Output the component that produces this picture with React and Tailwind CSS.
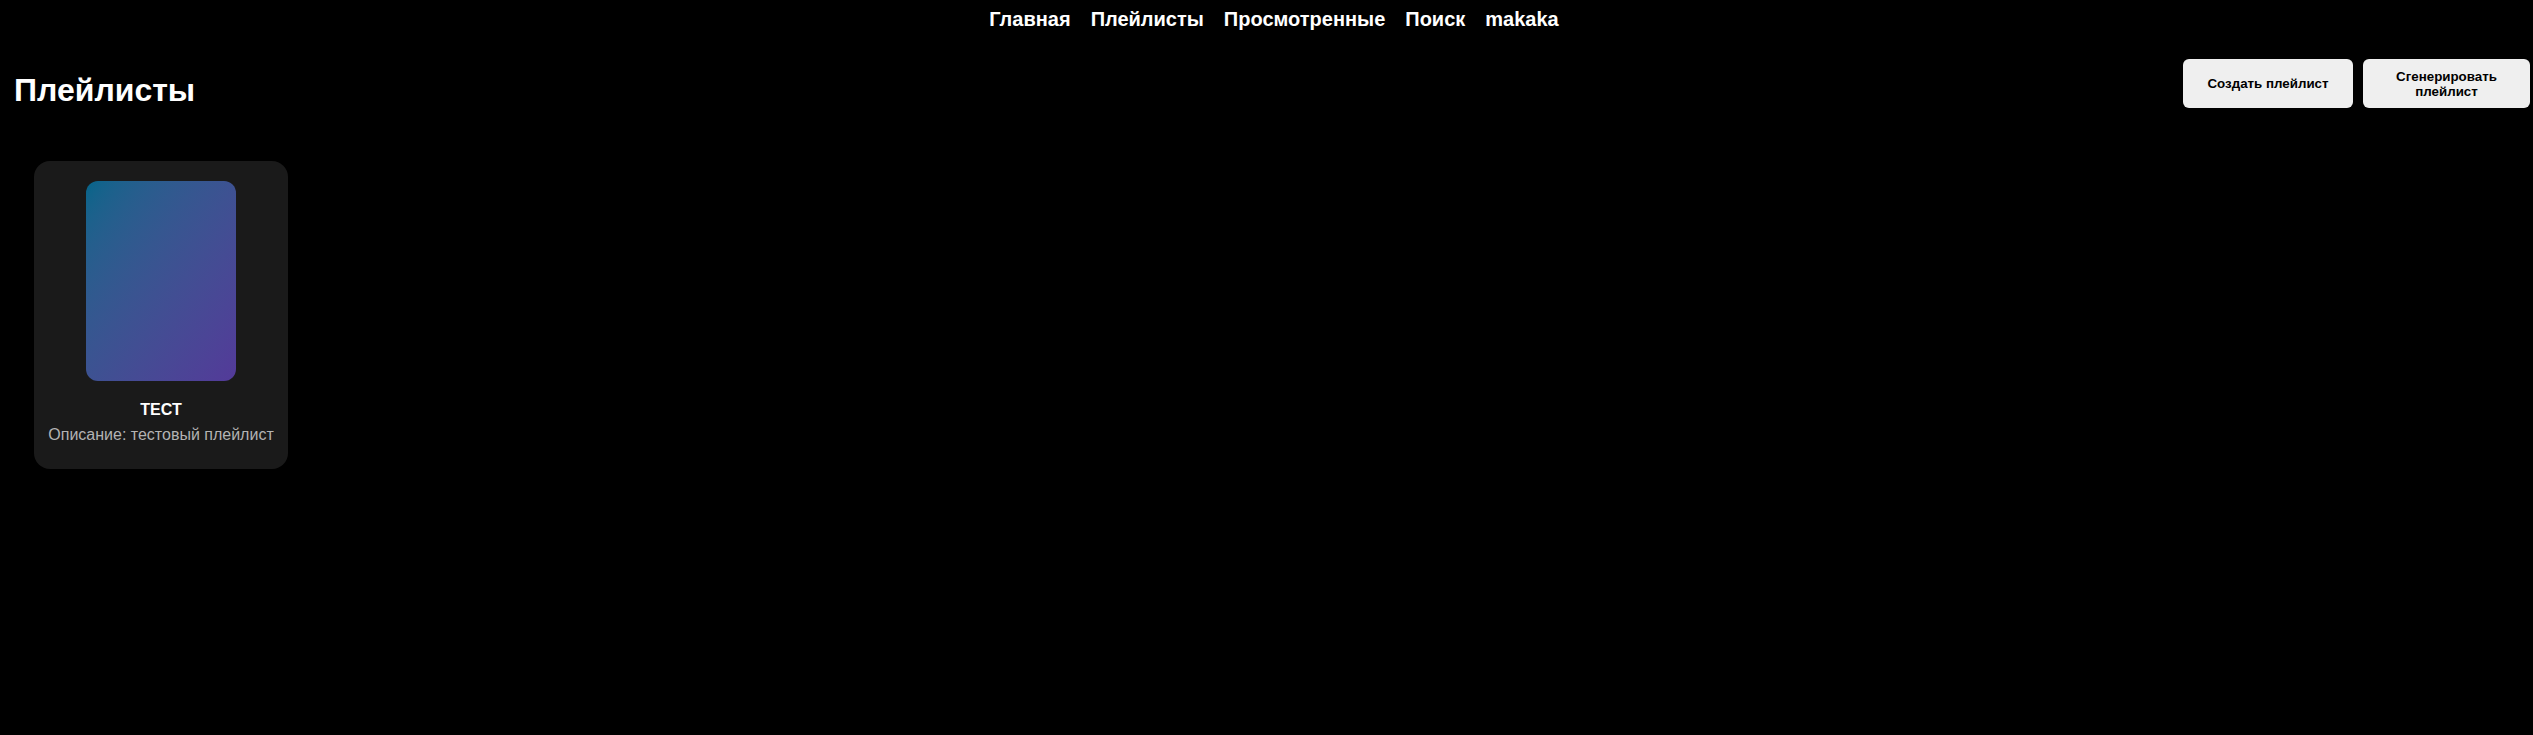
export default function App() {
  const font = { fontFamily: '"Liberation Sans", Arial, sans-serif' };
  const links = ["Главная", "Плейлисты", "Просмотренные", "Поиск", "makaka"];
  return (
    <div className="min-h-[735px] w-full bg-black text-white" style={font}>
      <nav className="flex justify-center gap-[20px] pl-[15px] pt-[8px]">
        {links.map((l) => (
          <a key={l} className="text-[20px] font-bold leading-[23px] text-white">
            {l}
          </a>
        ))}
      </nav>
      <div className="flex items-start justify-between pl-[14px] pr-[3px]">
        <h1 className="mt-[41px] text-[32px] font-bold leading-[37px]">Плейлисты</h1>
        <div className="mt-[28px] flex gap-[10px]">
          <button className="h-[49px] w-[170px] rounded-[6px] bg-[#efefef] text-[13.33px] font-bold leading-[15px] text-black">
            Создать плейлист
          </button>
          <button className="h-[49px] w-[167px] rounded-[6px] bg-[#efefef] px-[10px] text-[13.33px] font-bold leading-[15px] text-black">
            Сгенерировать плейлист
          </button>
        </div>
      </div>
      <div className="mt-[52px] flex pl-[34px]">
        <div className="flex h-[308px] w-[254px] flex-col items-center rounded-[16px] bg-[#1a1a1a] pt-[20px]">
          <div className="h-[200px] w-[150px] rounded-[12px] bg-gradient-to-br from-[#03658a] to-[#533a99]" />
          <div className="mt-[20px] text-[16px] font-bold leading-[18px] text-white">ТЕСТ</div>
          <div className="mt-[7px] text-[16px] leading-[18px] text-[#b3b3b3]">
            Описание: тестовый плейлист
          </div>
        </div>
      </div>
    </div>
  );
}
